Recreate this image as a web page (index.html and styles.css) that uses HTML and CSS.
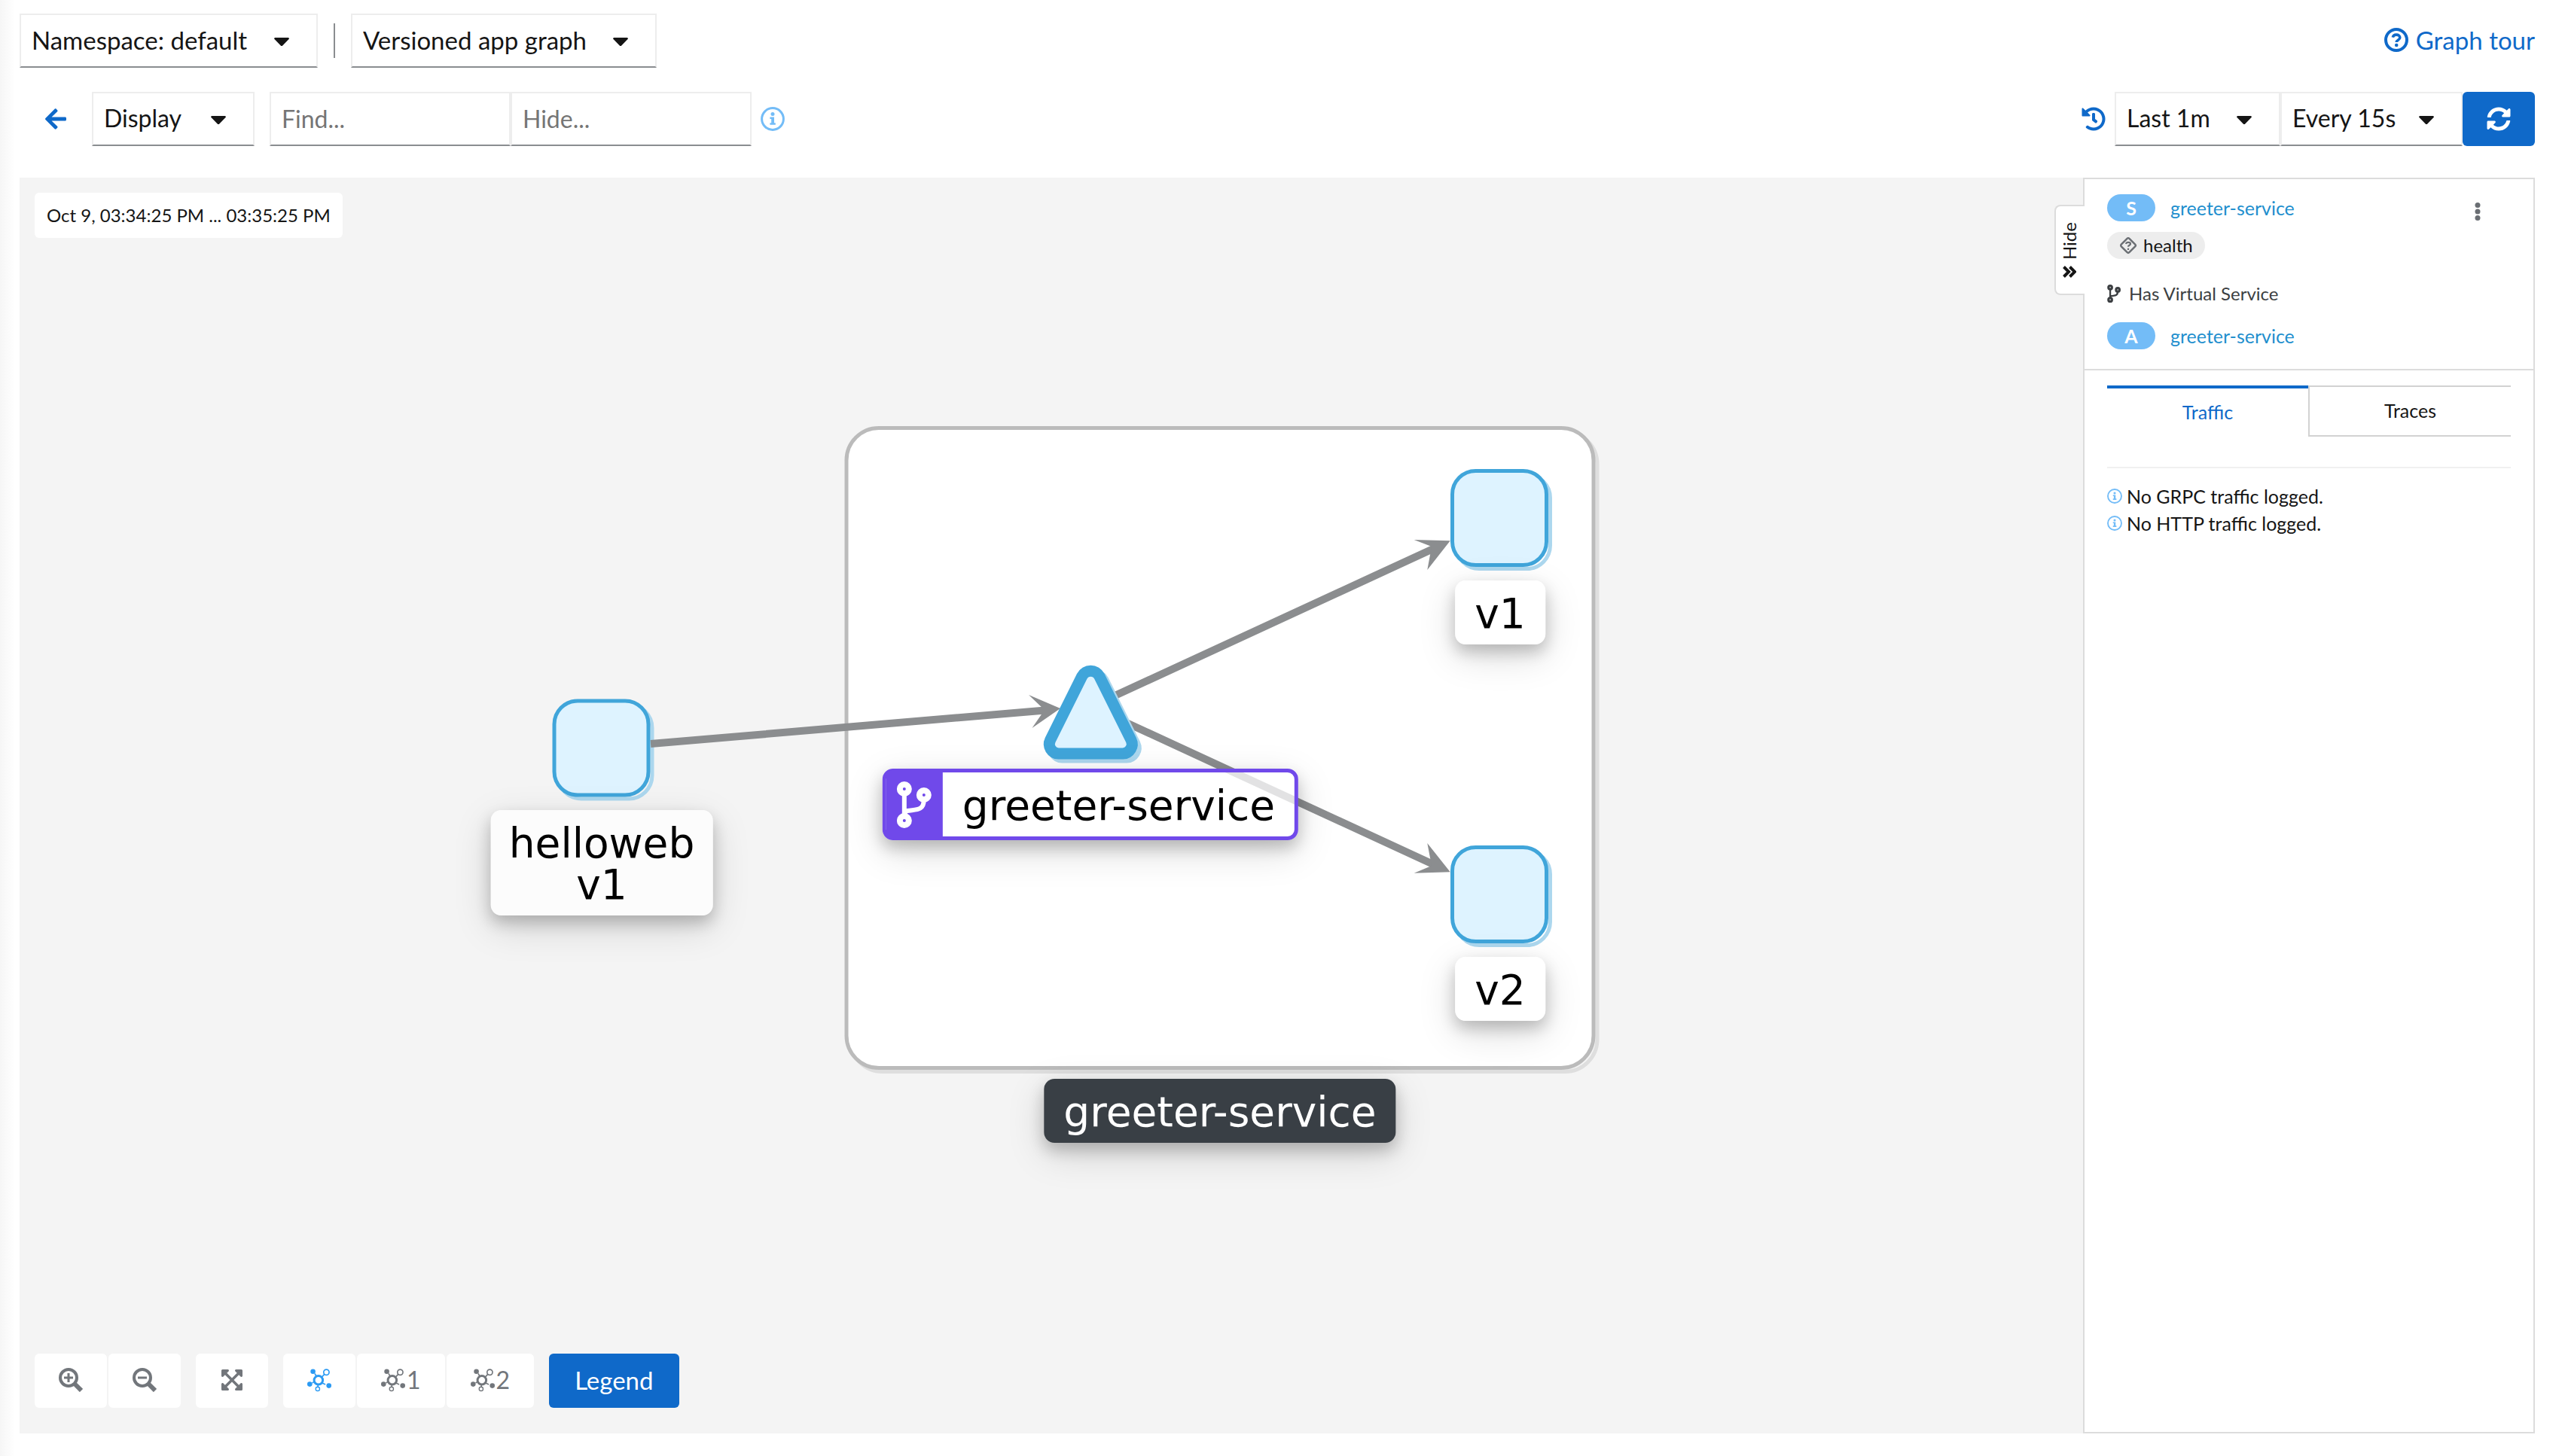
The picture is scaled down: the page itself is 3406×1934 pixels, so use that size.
FILE: index.html
```html
<!DOCTYPE html>
<html lang="en">
<head>
<meta charset="utf-8">
<meta name="viewport" content="width=device-width, initial-scale=1">
<title>Graph</title>
<link rel="stylesheet" href="styles.css">
</head>
<body>
<svg class="sprite" aria-hidden="true">
  <symbol id="info" viewBox="0 0 32 32">
    <circle cx="16" cy="16" r="14.4" fill="none" stroke="currentColor" stroke-width="3"/>
    <circle cx="16" cy="9.6" r="2.5" fill="currentColor"/>
    <path d="M12.4 13.4h5.6v7.8h1.8v2.6h-7.4v-2.6h1.8V16h-1.8z" fill="currentColor"/>
  </symbol>
  <symbol id="branch" viewBox="0 0 48 62">
    <g fill="none" stroke="currentColor">
      <circle cx="10" cy="10" r="6" stroke-width="8"/>
      <circle cx="36" cy="18" r="6" stroke-width="8"/>
      <circle cx="10" cy="52" r="6" stroke-width="8"/>
      <path d="M10 16v30M36 24c0 16-12 13-22 15q-3 1-4 5" stroke-width="6"/>
    </g>
  </symbol>
  <symbol id="topology" viewBox="0 0 97 92">
    <g fill="currentColor">
      <circle cx="23" cy="12" r="10"/><circle cx="10" cy="63" r="10"/><circle cx="87" cy="69" r="10"/>
    </g>
    <g fill="none" stroke="currentColor">
      <circle cx="77" cy="15" r="11" stroke-width="5"/>
      <circle cx="45" cy="47" r="17.500" stroke-width="9"/>
      <circle cx="42" cy="82" r="8" stroke-width="4"/>
      <path d="M69 23L58 35M30 20l6 10M20 58l6-4M60 58l13 6M43 65v9" stroke-width="5"/>
    </g>
  </symbol>
</svg>

<div class="page">
  <header class="bar bar-top">
    <div class="bar-group">
      <span class="picker picker-namespace"><select aria-label="Namespace"><option>Namespace: default</option></select></span>
      <span class="separator"></span>
      <span class="picker picker-graph"><select aria-label="Graph type"><option>Versioned app graph</option></select></span>
    </div>
    <a class="tour" href="#tour">
      <svg class="icon-l" viewBox="0 0 32 32" aria-hidden="true"><circle cx="16" cy="16" r="14" fill="none" stroke="currentColor" stroke-width="4"/><path d="M11.300 12.600c.6-2.400 2.400-3.500 4.700-3.500 2.600 0 4.800 1.500 4.800 4 0 3.200-4.600 3.100-4.600 5.900" fill="none" stroke="currentColor" stroke-width="3.600"/><circle cx="16.200" cy="23" r="2.300" fill="currentColor"/></svg>
      Graph tour
    </a>
  </header>

  <div class="bar bar-tools">
    <div class="bar-group tools">
      <a class="back" href="#back" aria-label="Back"><svg viewBox="0 0 448 512" aria-hidden="true"><path fill="currentColor" d="M257.500 445.100l-22.200 22.200c-9.400 9.400-24.600 9.400-33.900 0L7 273c-9.400-9.400-9.400-24.600 0-33.900L201.400 44.700c9.400-9.400 24.600-9.400 33.900 0l22.200 22.200c9.500 9.500 9.300 25-.4 34.300L136.600 216H424c13.300 0 24 10.700 24 24v32c0 13.300-10.700 24-24 24H136.600l120.500 114.800c9.800 9.300 10 24.800.4 34.300z"/></svg></a>
      <span class="picker picker-display"><select aria-label="Display"><option>Display</option></select></span>
      <div class="filters">
        <input class="filter" type="text" placeholder="Find..." aria-label="Find">
        <input class="filter" type="text" placeholder="Hide..." aria-label="Hide">
        <svg class="icon-l info" aria-hidden="true"><use href="#info"/></svg>
      </div>
    </div>
    <div class="bar-group refresh-group">
      <svg class="icon-l history" viewBox="0 0 512 512" aria-hidden="true"><path fill="currentColor" d="M504 255.531c.253 136.640-111.180 248.372-247.820 248.468-59.015.042-113.223-20.530-155.822-54.911-11.077-8.940-11.905-25.541-1.839-35.607l11.267-11.267c8.609-8.609 22.353-9.551 31.891-1.984C173.062 425.135 212.781 440 256 440c101.705 0 184-82.311 184-184 0-101.705-82.311-184-184-184-48.814 0-93.149 18.969-126.068 49.932l50.754 50.754c10.080 10.080 2.941 27.314-11.313 27.314H24c-8.837 0-16-7.163-16-16V38.627c0-14.254 17.234-21.393 27.314-11.314l49.372 49.372C129.209 34.136 189.552 8 256 8c136.810 0 247.747 110.780 248 247.531zm-180.912 78.784l9.823-12.630c8.138-10.463 6.253-25.542-4.210-33.679L288 256.349V152c0-13.255-10.745-24-24-24h-16c-13.255 0-24 10.745-24 24v135.651l65.409 50.874c10.463 8.137 25.541 6.253 33.679-4.210z"/></svg>
      <span class="picker picker-duration"><select aria-label="Duration"><option>Last 1m</option></select></span>
      <span class="picker picker-interval"><select aria-label="Refresh interval"><option>Every 15s</option></select></span>
      <button class="primary refresh" type="button" aria-label="Refresh"><svg class="icon-l" viewBox="0 0 512 512" aria-hidden="true"><path fill="currentColor" d="M370.720 133.280C339.458 104.008 298.888 87.962 255.848 88c-77.458.068-144.328 53.178-162.791 126.850-1.344 5.363-6.122 9.150-11.651 9.150H24.103c-7.498 0-13.194-6.807-11.807-14.176C33.933 94.924 134.813 8 256 8c66.448 0 126.791 26.136 171.315 68.685L463.030 40.970C478.149 25.851 504 36.559 504 57.941V192c0 13.255-10.745 24-24 24H345.941c-21.382 0-32.090-25.851-16.971-40.971l41.750-41.749zM32 296h134.059c21.382 0 32.090 25.851 16.971 40.971l-41.750 41.750c31.262 29.273 71.835 45.319 114.876 45.280 77.418-.070 144.315-53.144 162.787-126.849 1.344-5.363 6.122-9.150 11.651-9.150h57.304c7.498 0 13.194 6.807 11.807 14.176C478.067 417.076 377.187 504 256 504c-66.448 0-126.791-26.136-171.315-68.685L48.970 471.030C33.851 486.149 8 475.441 8 454.059V320c0-13.255 10.745-24 24-24z"/></svg></button>
    </div>
  </div>

  <main class="workspace">
    <section class="canvas" aria-label="Graph">
      <div class="time-range">Oct 9, 03:34:25 PM ... 03:35:25 PM</div>

      <div class="stage">
        <svg class="shapes" viewBox="546 513 1700 1100" aria-hidden="true">
          <rect class="group-ghost" x="1129" y="573.500" width="992" height="850" rx="43"/>
          <rect class="group" x="1124" y="568.500" width="992" height="850" rx="43"/>
          <g class="ghost">
            <rect x="741" y="936" width="125" height="125" rx="31"/>
            <rect x="1933.500" y="630.500" width="125" height="125" rx="31"/>
            <rect x="1933.500" y="1130.500" width="125" height="125" rx="31"/>
          </g>
          <g class="edge">
            <path d="M864 988L1388 943.500M1448 939L1904 728.500M1448 938L1904 1148.500"/>
          </g>
          <g class="arrow">
            <path d="M1408 941L1366 923L1387 943L1370.500 967Z"/>
            <path d="M1925.700 718.300L1877.700 717L1901 726L1895.300 757Z"/>
            <path d="M1925.700 1158.300L1895.300 1120L1901 1150L1877.700 1159.700Z"/>
          </g>
          <g class="node">
            <rect x="736" y="931" width="125" height="125" rx="31"/>
            <rect x="1928.500" y="625.500" width="125" height="125" rx="31"/>
            <rect x="1928.500" y="1125.500" width="125" height="125" rx="31"/>
          </g>
          <path class="service-ghost" d="M1464.900 903.300L1507 988A12.600 12.600 0 0 1 1496 1006H1410.600A12.600 12.600 0 0 1 1399.600 988L1441.700 903.300A13 13 0 0 1 1464.900 903.300Z"/>
          <path class="service" d="M1459.900 898.300L1502 983A12.600 12.600 0 0 1 1491 1001H1405.600A12.600 12.600 0 0 1 1394.600 983L1436.700 898.300A13 13 0 0 1 1459.900 898.300Z"/>
        </svg>
        <div class="label label-helloweb">helloweb<br>v1</div>
        <div class="label label-v1">v1</div>
        <div class="label label-v2">v2</div>
        <div class="label label-service"><span class="label-badge"><svg aria-hidden="true"><use href="#branch"/></svg></span><span class="label-text">greeter-service</span></div>
        <div class="label label-group">greeter-service</div>
      </div>

      <div class="controls">
        <div class="control-set">
          <button class="control" type="button" aria-label="Zoom in"><svg class="icon-l" viewBox="0 0 32 32" fill="none" stroke="currentColor" aria-hidden="true"><circle cx="13" cy="13" r="11" stroke-width="4"/><path d="M21 21L30 30" stroke-width="6"/><path d="M7 13h12M13 7v12" stroke-width="3"/></svg></button>
          <button class="control" type="button" aria-label="Zoom out"><svg class="icon-l" viewBox="0 0 32 32" fill="none" stroke="currentColor" aria-hidden="true"><circle cx="13" cy="13" r="11" stroke-width="4"/><path d="M21 21L30 30" stroke-width="6"/><path d="M7 13h12" stroke-width="3"/></svg></button>
        </div>
        <button class="control" type="button" aria-label="Fit to screen"><svg class="icon-l" viewBox="0 0 448 512" aria-hidden="true"><path fill="currentColor" d="M448 344v112a23.940 23.940 0 0 1-24 24H312c-21.390 0-32.090-25.900-17-41l36.200-36.200L224 295.600 116.770 402.900 153 439c15.090 15.100 4.390 41-17 41H24a23.940 23.940 0 0 1-24-24V344c0-21.400 25.890-32.100 41-17l36.190 36.200L184.460 256 77.180 148.700 41 185c-15.100 15.100-41 4.400-41-17V56a23.940 23.940 0 0 1 24-24h112c21.390 0 32.090 25.900 17 41l-36.200 36.200L224 216.400l107.230-107.300L295 73c-15.090-15.100-4.390-41 17-41h112a23.940 23.940 0 0 1 24 24v112c0 21.400-25.890 32.100-41 17l-36.190-36.200L263.540 256l107.280 107.300L407 327.100c15.100-15.200 41-4.500 41 16.900z"/></svg></button>
        <div class="control-set">
          <button class="control control-active" type="button" aria-label="Default layout"><svg class="icon-l" aria-hidden="true"><use href="#topology"/></svg></button>
          <button class="control" type="button"><svg class="icon-l" aria-hidden="true"><use href="#topology"/></svg>1</button>
          <button class="control" type="button"><svg class="icon-l" aria-hidden="true"><use href="#topology"/></svg>2</button>
        </div>
        <button class="primary legend" type="button">Legend</button>
      </div>
    </section>

    <aside class="side">
      <button class="side-toggle" type="button"><svg viewBox="0 0 18 16" fill="none" stroke="currentColor" stroke-width="4" aria-hidden="true"><path d="M1.500 1.500L8 8l-6.500 6.500M9.500 1.500L16 8l-6.500 6.500"/></svg><span>Hide</span></button>
      <div class="side-head">
        <div class="entity"><span class="badge">S</span><a href="#service">greeter-service</a>
          <button class="kebab" type="button" aria-label="Actions"><svg viewBox="0 0 8 24" fill="currentColor" aria-hidden="true"><circle cx="4" cy="3.500" r="3.500"/><circle cx="4" cy="12" r="3.500"/><circle cx="4" cy="20.500" r="3.500"/></svg></button>
        </div>
        <div class="health"><svg viewBox="0 0 24 24" fill="none" stroke="currentColor" aria-hidden="true"><rect x="4.500" y="4.500" width="15" height="15" rx="2" transform="rotate(45 12 12)" stroke-width="2.400"/><path d="M9 10c.4-1.700 1.500-2.200 3-2.200 1.700 0 3 .8 3 2.200 0 1.900-3 1.600-3 3.800M12 15.700v2.300" stroke-width="2.200"/></svg>health</div>
        <div class="virtual"><svg aria-hidden="true"><use href="#branch"/></svg>Has Virtual Service</div>
        <div class="entity"><span class="badge">A</span><a href="#app">greeter-service</a></div>
      </div>
      <div class="side-body">
        <div class="tabs" role="tablist">
          <button class="tab tab-active" type="button" role="tab" aria-selected="true">Traffic</button>
          <button class="tab" type="button" role="tab" aria-selected="false">Traces</button>
        </div>
        <hr>
        <p class="note"><svg aria-hidden="true"><use href="#info"/></svg>No GRPC traffic logged.</p>
        <p class="note"><svg aria-hidden="true"><use href="#info"/></svg>No HTTP traffic logged.</p>
      </div>
    </aside>
  </main>
</div>
</body>
</html>
```
FILE: styles.css
```css
:root {
  --blue: #0f69c9;
  --ink: #151515;
  --grey: #72767b;
  --light-blue: #73bcf7;
  --line: #dcdcdc;
}

* { box-sizing: border-box; }

body {
  margin: 0;
  background: #fff;
  color: var(--ink);
  font: 32px/48px Lato, "Open Sans", sans-serif;
}

button, input, select { font: inherit; color: inherit; margin: 0; }
button { border: 0; background: none; padding: 0; cursor: pointer; }
a { text-decoration: none; }
svg { display: block; flex: none; }

.sprite { position: absolute; width: 0; height: 0; }
.icon-l { width: 32px; height: 32px; }

.page {
  display: flex;
  flex-direction: column;
  min-height: 100vh;
  padding: 18px 40px 30px 26px;
  background: linear-gradient(to right, #f6f6f6, #fff 20px);
}

/* Toolbars */
.bar { display: flex; justify-content: space-between; align-items: center; }
.bar-top { font-size: 33px; }
.bar-tools { margin: 32px 0 42px; }
.bar-group { display: flex; align-items: center; gap: 20px; }
.separator { width: 2px; height: 46px; margin: 0 1px; background: #8a8d90; }

.picker { position: relative; display: block; }
.picker select, .filter {
  display: block;
  width: 100%;
  height: 72px;
  padding: 0 14px 2px;
  border: 2px solid #ededed;
  border-bottom-color: #8a8d90;
  border-radius: 0;
  background: #fff;
  appearance: none;
}
.picker::after {
  content: "";
  position: absolute;
  top: 32px;
  right: 38px;
  width: 20px;
  height: 11px;
  background: var(--ink);
  clip-path: polygon(4% 0, 96% 0, 100% 14%, 54% 100%, 46% 100%, 0 14%);
  pointer-events: none;
}
.picker-namespace { width: 396px; }
.picker-graph { width: 406px; }
.picker-display { width: 216px; }
.picker-duration { width: 220px; }
.picker-interval { width: 242px; }

.tour { display: flex; align-items: center; gap: 10px; padding-bottom: 2px; color: var(--blue); }
.tools { padding-left: 34px; }
.back { width: 28px; margin-right: 14px; color: var(--blue); }
.back svg { width: 28px; height: 32px; }
.filters { display: flex; align-items: center; }
.filter { width: 320px; }
.filter::placeholder { color: #757575; opacity: 1; }
.info { margin-left: 12px; color: var(--light-blue); }

.refresh-group { gap: 0; }
.history { margin-right: 12px; color: var(--blue); }
.primary {
  display: flex;
  align-items: center;
  justify-content: center;
  height: 72px;
  border-radius: 6px;
  background: var(--blue);
  color: #fff;
}
.refresh { width: 96px; }
.legend { padding: 0 34px 2px; font-size: 33px; }

/* Graph */
.workspace { display: flex; flex: 1; }
.canvas {
  flex: 1;
  display: grid;
  grid-template-rows: auto 1fr auto;
  padding: 20px 20px 34px;
  background: #f4f4f4;
}
.time-range {
  grid-area: 1 / 1;
  justify-self: start;
  padding: 12px 16px;
  border-radius: 6px;
  background: #fff;
  font-size: 24px;
  line-height: 36px;
}
.stage {
  position: relative;
  grid-area: 1 / 1 / 4 / 2;
  place-self: center;
  width: 1700px;
  height: 1100px;
}
.shapes { width: 100%; height: 100%; }
.group { fill: #fff; stroke: #bbb; stroke-width: 5; }
.group-ghost { fill: none; stroke: #dedede; stroke-width: 5; }
.node rect, .service { fill: #def3ff; stroke: #40a5da; stroke-width: 5; }
.ghost { fill: none; stroke: #acd7ee; stroke-width: 5; }
.service { stroke-width: 15; }
.service-ghost { fill: none; stroke: #acd7ee; stroke-width: 15; }
.edge { fill: none; stroke: #8b8d8f; stroke-width: 10; }
.arrow { fill: #8b8d8f; }

.label {
  position: absolute;
  transform: translateX(-50%);
  padding: 17px 26px 13px;
  border-radius: 14px;
  background: rgba(255, 255, 255, .75);
  box-shadow: 0 10px 20px rgba(0, 0, 0, .2), 0 15px 50px rgba(0, 0, 0, .15);
  color: #000;
  font: 55px/55px Verdana, "DejaVu Sans", sans-serif;
  text-align: center;
  white-space: nowrap;
}
.label-helloweb { left: 253px; top: 563px; padding-inline: 24px; }
.label-v1 { left: 1446px; top: 258px; }
.label-v2 { left: 1446px; top: 758px; }
.label-group { left: 1074px; top: 920px; background: #393f45; color: #fff; }
.label-service {
  left: 902px;
  top: 508px;
  display: flex;
  padding: 0;
  border: 5px solid #7049ea;
}
.label-badge {
  display: flex;
  align-items: center;
  justify-content: center;
  width: 75px;
  background: #7049ea;
  color: #fff;
}
.label-badge svg { width: 48px; height: 62px; }
.label-text { padding: 17px 26px 13px; }

.controls { grid-area: 3 / 1; display: flex; gap: 20px; z-index: 1; }
.control-set { display: flex; gap: 2px; }
.control {
  display: flex;
  align-items: center;
  gap: 2px;
  height: 72px;
  padding: 0 32px 2px;
  border-radius: 6px;
  background: #fff;
  color: var(--grey);
}
.control-active { color: #2b9af3; }

/* Side panel */
.side {
  position: relative;
  width: 600px;
  border: 2px solid var(--line);
  background: #fff;
  font-size: 25px;
  line-height: 36px;
}
.side-toggle {
  position: absolute;
  top: 34px;
  left: -40px;
  display: flex;
  flex-direction: column-reverse;
  align-items: center;
  justify-content: center;
  gap: 8px;
  width: 40px;
  height: 120px;
  padding-right: 2px;
  border: 2px solid var(--line);
  border-right: 0;
  border-radius: 8px 0 0 8px;
  background: #fff;
  font-size: 24px;
}
.side-toggle span { writing-mode: vertical-rl; transform: rotate(180deg); line-height: 28px; }
.side-toggle svg { width: 18px; height: 16px; }
.side-head { padding: 20px 30px 26px; border-bottom: 2px solid var(--line); }
.entity { display: flex; align-items: center; height: 36px; gap: 20px; color: #1f8fce; }
.entity a { color: inherit; }
.badge {
  width: 64px;
  border-radius: 18px;
  background: var(--light-blue);
  color: #fff;
  font-weight: 700;
  text-align: center;
}
.kebab { margin: 10px 40px 0 auto; color: #6a6e73; }
.kebab svg { width: 8px; height: 24px; }
.health {
  display: flex;
  align-items: center;
  gap: 8px;
  width: fit-content;
  margin: 14px 0 28px;
  padding: 0 16px;
  border-radius: 18px;
  background: #ededed;
  font-size: 24px;
}
.health svg { width: 24px; height: 24px; color: #6a6e73; }
.virtual { display: flex; align-items: center; gap: 10px; margin-bottom: 20px; color: #3c3f42; font-size: 24px; }
.virtual svg { width: 19px; height: 24px; }
.side-body { padding: 20px 30px; }
.tabs { display: flex; }
.tab {
  flex: 1;
  height: 68px;
  padding-bottom: 2px;
  border: 2px solid #d2d2d2;
  border-right: 0;
}
.tab-active {
  border: 0;
  border-top: 4px solid var(--blue);
  color: var(--blue);
}
hr { height: 2px; margin: 40px 0 19px; border: 0; background: #f0f0f0; }
.note { display: flex; align-items: center; gap: 6px; margin: 0; }
.note svg { width: 20px; height: 20px; color: var(--light-blue); }
```
